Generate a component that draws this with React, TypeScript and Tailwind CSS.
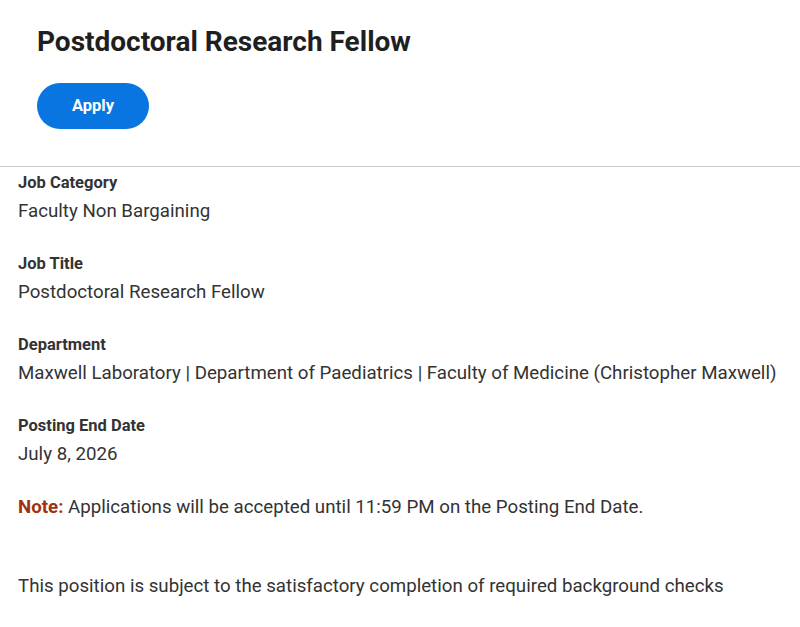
const fields = [
  { label: 'Job Category', value: 'Faculty Non Bargaining' },
  { label: 'Job Title', value: 'Postdoctoral Research Fellow' },
  {
    label: 'Department',
    value: 'Maxwell Laboratory | Department of Paediatrics | Faculty of Medicine (Christopher Maxwell)',
  },
  { label: 'Posting End Date', value: 'July 8, 2026' },
];

export default function App() {
  return (
    <div className="min-h-[627px] w-[800px] bg-white text-[#333333]" style={{ fontFamily: 'Roboto, "Liberation Sans", sans-serif' }}>
      {/* header */}
      <div className="pb-[37px] pl-[37px] pt-[24px]">
        <h1 className="text-[28px] font-bold leading-[36px] text-[#1f1f1f]">Postdoctoral Research Fellow</h1>
        <button className="mt-[23px] flex h-[46px] w-[112px] items-center justify-center rounded-full bg-[#0875e1] text-[16.5px] font-bold text-white">
          Apply
        </button>
      </div>

      <div className="border-t border-[#cccccc]" />

      {/* details */}
      <div className="px-[18px] pt-[6px]">
        {fields.map((f) => (
          <div key={f.label} className="mb-[31px]">
            <div className="text-[16.5px] font-bold leading-[20px]">{f.label}</div>
            <div className="mt-[6px] text-[18.7px] leading-[24px]">{f.value}</div>
          </div>
        ))}

        <p className="-mt-[2px] text-[18.7px] leading-[24px]">
          <span className="font-bold text-[#a0330e]">Note:</span> Applications will be accepted until 11:59 PM on the
          Posting End Date.
        </p>
        <p className="mt-[55px] text-[18.7px] leading-[24px]">
          This position is subject to the satisfactory completion of required background checks
        </p>
      </div>
    </div>
  );
}
